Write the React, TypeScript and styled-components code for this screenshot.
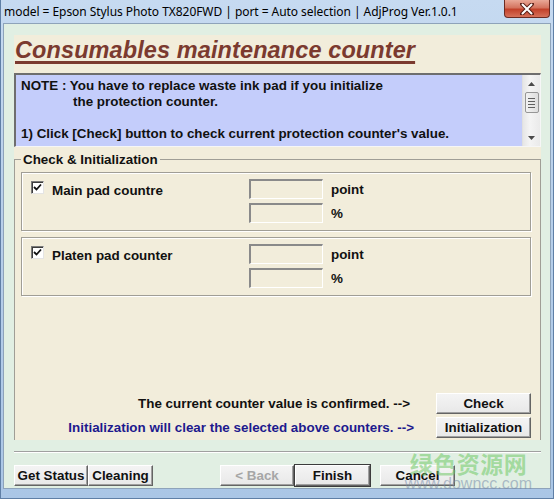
import styled, { createGlobalStyle } from 'styled-components';

const GlobalStyle = createGlobalStyle`
  html, body {
    margin: 0;
    padding: 0;
    background: #ffffff;
  }
  body {
    font-family: 'Liberation Sans', Arial, sans-serif;
  }
`;

const Window = styled.div`
  position: relative;
  width: 554px;
  height: 499px;
  box-sizing: border-box;
  display: flex;
  flex-direction: column;
  background: linear-gradient(180deg, #c6daf1 0%, #b8d0ea 40%, #aac6e6 100%);
  border-left: 1px solid #5f7fa6;
  border-right: 1px solid #5f7fa6;
  border-bottom: 1px solid #5f7fa6;
  padding: 0 2px 9px 2px;
  overflow: hidden;
`;

const TitleBar = styled.div`
  height: 23px;
  display: flex;
  align-items: center;
  justify-content: space-between;
  flex-shrink: 0;
`;

const TitleText = styled.span`
  font-family: 'Noto Sans', 'Noto Sans CJK SC', sans-serif;
  font-size: 12px;
  color: #000;
  padding-left: 1px;
  letter-spacing: -0.05px;
  white-space: nowrap;
`;

const CloseButton = styled.div`
  align-self: flex-start;
  width: 46px;
  height: 18px;
  margin-right: 1px;
  box-sizing: border-box;
  border: 1px solid #6b2b22;
  border-top: none;
  border-radius: 0 0 4px 4px;
  background: linear-gradient(180deg, #e9a897 0%, #d4745f 45%, #c2412a 55%, #d6715a 100%);
  display: flex;
  align-items: center;
  justify-content: center;
`;

const Client = styled.div`
  flex: 1;
  display: flex;
  flex-direction: column;
  background: #e1efe3;
  border: 1px solid #8ea3ba;
  padding: 11px 9px 2px 10px;
  min-height: 0;
`;

const Panel = styled.div`
  height: 407px;
  display: flex;
  flex-direction: column;
  background: #f2eddb;
`;

const Heading = styled.h1`
  margin: 0;
  height: 38px;
  box-sizing: border-box;
  padding: 2px 0 0 1px;
  font-family: 'Liberation Sans', Arial, sans-serif;
  font-size: 23.5px;
  font-weight: bold;
  font-style: italic;
  color: #7b3a2f;
  text-decoration: underline;
  text-decoration-thickness: 3px;
  text-underline-offset: 3px;
  line-height: 26px;
  letter-spacing: 0.1px;
`;

const NoteBox = styled.div`
  height: 74px;
  box-sizing: border-box;
  display: flex;
  background: #c4cdfb;
  border-top: 2px solid #6e6e6e;
  border-left: 2px solid #6e6e6e;
  border-bottom: 1px solid #f6f6f6;
  border-right: 1px solid #f6f6f6;
`;

const NoteText = styled.div`
  flex: 1;
  padding: 3px 0 0 5px;
  font-size: 13.4px;
  font-weight: bold;
  line-height: 16px;
  color: #111;
`;

const NoteLine = styled.div<{ $indent?: number }>`
  height: 16px;
  padding-left: ${(p) => p.$indent ?? 0}px;
  white-space: nowrap;
`;

const ScrollBar = styled.div`
  width: 17px;
  display: flex;
  flex-direction: column;
  align-items: center;
  background: linear-gradient(90deg, #e6e6e6, #f4f4f4 40%, #eaeaea);
  border-left: 1px solid #e0e0e0;
`;

const ScrollArrow = styled.div`
  height: 17px;
  display: flex;
  align-items: center;
  justify-content: center;
`;

const ScrollThumb = styled.div`
  width: 14px;
  height: 21px;
  box-sizing: border-box;
  border: 1px solid #969696;
  border-radius: 2px;
  background: linear-gradient(90deg, #f2f2f2, #dedede);
  display: flex;
  flex-direction: column;
  align-items: center;
  justify-content: center;
  gap: 2px;
`;

const ScrollTrack = styled.div`
  flex: 1;
`;

const Grip = styled.span`
  width: 7px;
  height: 1px;
  background: #606060;
`;

const Group = styled.fieldset`
  flex: 1;
  margin: 5px 0 0 0;
  min-width: 0;
  padding: 5px 9px 2px 6px;
  border: 1px solid #a09e96;
  border-bottom: none;
  display: flex;
  flex-direction: column;
`;

const Legend = styled.legend`
  padding: 0 2px;
  margin-left: 0;
  font-size: 13.4px;
  font-weight: bold;
  color: #111;
  line-height: 15px;
`;

const CounterBox = styled.div`
  display: flex;
  border: 1px solid #a09e96;
  box-shadow: 1px 1px 0 #ffffff, inset 1px 1px 0 #ffffff;
  padding: 6px 0 7px 0;
  margin-bottom: 6px;
`;

const CounterLabel = styled.label`
  width: 227px;
  display: flex;
  align-items: flex-start;
  gap: 8px;
  padding: 2px 0 0 9px;
  box-sizing: border-box;
  font-size: 13.4px;
  font-weight: bold;
  color: #111;
`;

const LabelText = styled.span`
  line-height: 15px;
  margin-top: 2px;
`;

const Check = styled.span`
  width: 13px;
  height: 13px;
  box-sizing: border-box;
  background: #fff;
  border-top: 1px solid #7a7a7a;
  border-left: 1px solid #7a7a7a;
  border-bottom: 1px solid #e4e4e4;
  border-right: 1px solid #e4e4e4;
  box-shadow: inset 1px 1px 0 #3c3c3c;
  display: flex;
  align-items: center;
  justify-content: center;
`;

const Fields = styled.div`
  display: grid;
  grid-template-columns: 74px auto;
  column-gap: 8px;
  row-gap: 4px;
  align-items: center;
`;

const Field = styled.div`
  height: 20px;
  box-sizing: border-box;
  background: #f2eddb;
  border-top: 2px solid #8a8a8a;
  border-left: 2px solid #8a8a8a;
  border-bottom: 1px solid #ffffff;
  border-right: 1px solid #ffffff;
`;

const Unit = styled.span`
  font-size: 13.4px;
  font-weight: bold;
  color: #111;
`;

const Actions = styled.div`
  margin-top: auto;
  display: flex;
  flex-direction: column;
  gap: 3px;
`;

const ActionRow = styled.div<{ $gap: number; $blue?: boolean }>`
  display: flex;
  justify-content: flex-end;
  align-items: center;
  gap: ${(p) => p.$gap}px;
  font-size: 13.4px;
  font-weight: bold;
  color: ${(p) => (p.$blue ? '#1d1a8e' : '#111')};
`;

const Button = styled.button<{ $width: number; $default?: boolean }>`
  width: ${(p) => p.$width}px;
  height: 21px;
  padding: 0;
  box-sizing: border-box;
  font-family: 'Liberation Sans', Arial, sans-serif;
  font-size: 13.4px;
  font-weight: bold;
  color: #111;
  background: linear-gradient(180deg, #f4f4f4, #e8e8e8);
  border-top: 1px solid #ffffff;
  border-left: 1px solid #ffffff;
  border-bottom: 1px solid #646464;
  border-right: 1px solid #646464;
  box-shadow: ${(p) =>
    p.$default
      ? '0 0 0 1px #3c3c3c, inset -1px -1px 0 #a0a0a0'
      : 'inset -1px -1px 0 #a0a0a0'};
  cursor: default;
  &:disabled {
    color: #a6a6a6;
  }
`;

const Separator = styled.div`
  margin-top: 11px;
  height: 1px;
  background: #a0a0a0;
  border-bottom: 1px solid #ffffff;
`;

const Footer = styled.div`
  margin-top: 12px;
  display: flex;
  align-items: center;
`;

const Spacer = styled.div<{ $w: number }>`
  width: ${(p) => p.$w}px;
  flex-shrink: 0;
`;

const Watermark = styled.div`
  position: absolute;
  right: 21px;
  bottom: 6px;
  display: flex;
  flex-direction: column;
  align-items: center;
  pointer-events: none;
`;

const WatermarkCn = styled.span`
  font-family: 'Noto Sans CJK SC', sans-serif;
  font-weight: bold;
  font-size: 23px;
  line-height: 25px;
  letter-spacing: 0.5px;
  color: rgba(110, 200, 100, 0.55);
`;

const WatermarkUrl = styled.span`
  font-family: 'Liberation Sans', Arial, sans-serif;
  font-size: 16px;
  line-height: 16px;
  color: rgba(120, 140, 170, 0.55);
`;

function CheckMark() {
  return (
    <svg width="9" height="9" viewBox="0 0 9 9">
      <path d="M1 4 L3.5 6.5 L8 1.5" stroke="#111" strokeWidth="1.8" fill="none" />
    </svg>
  );
}

function Counter({ label }: { label: string }) {
  return (
    <CounterBox>
      <CounterLabel>
        <Check>
          <CheckMark />
        </Check>
        <LabelText>{label}</LabelText>
      </CounterLabel>
      <Fields>
        <Field />
        <Unit>point</Unit>
        <Field />
        <Unit>%</Unit>
      </Fields>
    </CounterBox>
  );
}

export default function App() {
  return (
    <>
      <GlobalStyle />
      <Window>
        <TitleBar>
          <TitleText>
            model = Epson Stylus Photo TX820FWD | port = Auto selection | AdjProg Ver.1.0.1
          </TitleText>
          <CloseButton>
            <svg width="14" height="12" viewBox="0 0 14 12">
              <path d="M2 1 L12 11 M12 1 L2 11" stroke="#5a2018" strokeWidth="4" strokeLinecap="round" />
              <path d="M2.5 1.5 L11.5 10.5 M11.5 1.5 L2.5 10.5" stroke="#ffffff" strokeWidth="2" strokeLinecap="round" />
            </svg>
          </CloseButton>
        </TitleBar>
        <Client>
          <Panel>
            <Heading>Consumables maintenance counter</Heading>
            <NoteBox>
              <NoteText>
                <NoteLine>NOTE : You have to replace waste ink pad if you initialize</NoteLine>
                <NoteLine $indent={52}>the protection counter.</NoteLine>
                <NoteLine />
                <NoteLine>1) Click [Check] button to check current protection counter's value.</NoteLine>
              </NoteText>
              <ScrollBar>
                <ScrollArrow>
                  <svg width="7" height="4" viewBox="0 0 7 4">
                    <path d="M0 4 L3.5 0 L7 4 Z" fill="#4a4a4a" />
                  </svg>
                </ScrollArrow>
                <ScrollThumb>
                  <Grip />
                  <Grip />
                  <Grip />
                  <Grip />
                </ScrollThumb>
                <ScrollTrack />
                <ScrollArrow>
                  <svg width="7" height="4" viewBox="0 0 7 4">
                    <path d="M0 0 L3.5 4 L7 0 Z" fill="#4a4a4a" />
                  </svg>
                </ScrollArrow>
              </ScrollBar>
            </NoteBox>
            <Group>
              <Legend>Check &amp; Initialization</Legend>
              <Counter label="Main pad countre" />
              <Counter label="Platen pad counter" />
              <Actions>
                <ActionRow $gap={26}>
                  <span>The current counter value is confirmed. --&gt;</span>
                  <Button $width={95}>Check</Button>
                </ActionRow>
                <ActionRow $gap={22} $blue>
                  <span>Initialization will clear the selected above counters. --&gt;</span>
                  <Button $width={95}>Initialization</Button>
                </ActionRow>
              </Actions>
            </Group>
          </Panel>
          <Separator />
          <Footer>
            <Button $width={74}>Get Status</Button>
            <Button $width={65}>Cleaning</Button>
            <Spacer $w={67} />
            <Button $width={74} disabled>
              &lt; Back
            </Button>
            <Spacer $w={1} />
            <Button $width={75} $default>
              Finish
            </Button>
            <Spacer $w={10} />
            <Button $width={75}>Cancel</Button>
          </Footer>
        </Client>
        <Watermark>
          <WatermarkCn>绿色资源网</WatermarkCn>
          <WatermarkUrl>www.downcc.com</WatermarkUrl>
        </Watermark>
      </Window>
    </>
  );
}
